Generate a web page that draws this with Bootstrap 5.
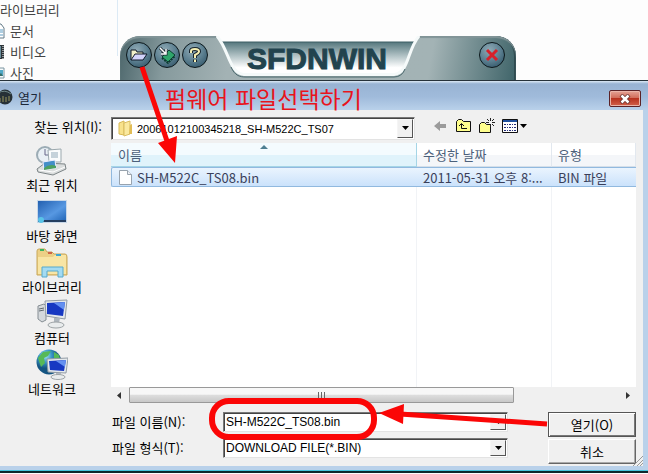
<!DOCTYPE html>
<html lang="ko">
<head>
<meta charset="utf-8">
<meta name="viewport" content="width=device-width, initial-scale=1">
<title>SFDNWIN - 열기</title>
<link href="https://cdn.jsdelivr.net/npm/bootstrap@5.3.0/dist/css/bootstrap.min.css" rel="stylesheet">
<style>
body{font:13px/20px "Liberation Sans","Noto Sans CJK KR",sans-serif;color:#000;background:#fdfdfd;min-width:648px;overflow-x:hidden}
svg{display:block;flex:none}
.ko{font-family:"Noto Sans CJK KR",sans-serif;font-weight:400}
.desk{height:80px}
.tree{width:118px;height:56px;padding-top:4px;border-right:1px solid #dceaf5;color:#444;line-height:12px}
.tree li{height:12px;margin-bottom:9px}
.skin{width:396px;height:44px;margin:36px 0 0 2px;border-radius:20px 20px 0 0;background:linear-gradient(100deg,#4c666b 0,#869a9d 12%,#a3b2b4 28%,#a3b3b5 78%,#3f6469 100%);box-shadow:inset 0 2px 1px #819497,inset -2px 0 0 #2f4b50;padding:0 11px 0 6px}
.plate{left:96px;top:0}
.brand{font:bold 30px/32px "Liberation Sans",sans-serif;color:#22434e;-webkit-text-stroke:1px #22434e;margin:7px 0 0 39px}
.orb{width:26px;height:26px;border:1px solid #0b171b;border-radius:50%;background:radial-gradient(circle at 40% 30%,#90aab5,#5b7f90 50%,#24475a);padding:0;display:grid;place-items:center}
.orbs{gap:2px;padding-top:6px}
.dialog{border-top:1px solid #26323a;background:#b9d1ea;padding:0 5px 5px 0;border-bottom:2px solid #10272c;box-shadow:inset 0 -1px #46c4dc}
.caption-bar{height:29px;background:linear-gradient(#dce9f5 0,#98b3d3 10%,#a0bbdb 55%,#b9d1ea);margin-right:-5px;padding-right:7px}
.caption-bar h1{font-size:13px;line-height:20px;margin:7px 0 0 4px;color:#1c2838}
.shut{width:32px;height:17px;margin-top:9px;padding:0;border:1px solid #5b2226;border-radius:2px;background:linear-gradient(#e5a496,#d16b58 48%,#b8331f 50%,#d2614a);box-shadow:inset 0 0 0 1px #eab5a9;display:grid;place-items:center}
.pane{background:#f0f0f0;padding:7px 7px 2px 0}
.lookrow{height:26px}
.side{width:111px}
.places{padding-bottom:5px}
.look-label{width:102px;margin-right:9px;text-align:right}
.combo{height:20px;background:#fff;border:1px solid;border-color:#777 #e3e3e3 #e3e3e3 #777;box-shadow:inset 1px 1px #444}
.combo select,.combo input{appearance:none;border:0;background:transparent;color:#000;min-width:0;flex:1;padding:0 2px;height:18px;font:12px/18px "Liberation Sans",sans-serif;outline:0}
.combo.tall{width:304px;height:23px}
.combo.tall select{height:21px;font-size:11px}
.drop{width:16px;border:1px solid;border-color:#f5f5f5 #555 #555 #f5f5f5;background:#f0f0f0;margin:1px;padding:0;display:grid;place-items:center}
.tool{border:0;background:none;padding:0}
.tools{gap:6px;margin-left:18px}
.place{height:51px;border:0;background:none;padding:2px 0 0;width:104px;color:#000;display:flex;flex-direction:column;align-items:center}
.place span{font-size:13px;line-height:18px}
.listing{background:#fff;min-width:0}
.files{table-layout:fixed;width:100%;border-collapse:separate;border-spacing:0}
.files th{height:24px;font-weight:400;padding:0 6px;border-right:1px solid #e2e8ef;border-bottom:1px solid #d5dfe9;background:linear-gradient(#fff 50%,#f4f6f9 50%);color:#4c607a;line-height:20px;position:relative}
.files th:first-child{width:306px;background:linear-gradient(#f4fbfe 50%,#e0f3fb 50%);border-color:#a5d5e6;padding-left:7px}
.files th:nth-child(2){width:135px}
.files td{height:20px;padding:0 6px;line-height:17px;background:linear-gradient(#eaf4fe,#cbe2fb);border:solid #91b9df;border-width:1px 0;white-space:nowrap;overflow:hidden;color:#3a3f5a}
.files td:first-child{border-left-width:1px;border-radius:2px 0 0 2px}
.files a{color:#3a3f5a;text-decoration:none}
.sorter{position:absolute;left:149px;top:1px}
.room{background:linear-gradient(90deg,transparent 305px,#f1f3f6 305px 306px,transparent 306px 440px,#f1f3f6 440px 441px,transparent 441px)}
.hbar{height:16px;background:#f0f0f0;padding:0 4px}
.thumb{flex:0 1 385px;margin-left:8px;border:1px solid #999;border-radius:1px;background:linear-gradient(#f7f7f7 45%,#dedede 50%,#c8c8c8);display:grid;place-items:center}
.fields{padding-top:9px;gap:0 40px}
.frow{height:26px}
.frow label{width:112px;flex:none;padding-left:1px}
.fbtns{gap:2px}
.fbtn{width:88px;height:25px;border:1px solid;border-color:#fff #666 #666 #fff;box-shadow:inset -1px -1px #aaa;background:#f0f0f0;padding:0;font-size:13px;line-height:20px;color:#000}
.fbtn.main{border-color:#555;box-shadow:inset 1px 1px #fff,inset -1px -1px #777}
.callout{position:absolute;left:0;top:0;pointer-events:none}
.tip{position:absolute;left:165px;top:82px;font-size:23px;line-height:32px;color:#e8141c;margin:0}
.grip{position:absolute;right:0;bottom:0}
</style>
<script src="https://cdn.jsdelivr.net/npm/bootstrap@5.3.0/dist/js/bootstrap.bundle.min.js"></script>
</head>
<body class="position-relative ko">
<section class="desk d-flex">
  <ul class="tree list-unstyled m-0 flex-shrink-0">
    <li>라이브러리</li>
    <li class="d-flex align-items-center"><svg width="10" height="16" viewBox="0 0 10 16"><path d="M-6 1H1L4 5V15H-6" fill="#fff" stroke="#627986"/><path d="M-1 7H3M-1 9H3M-1 12H3" stroke="#5d9bc2"/></svg>문서</li>
    <li class="d-flex align-items-center"><svg width="10" height="16" viewBox="0 0 10 16"><path d="M-2 1H4V15H-2Z" fill="#2d3439"/><path d="M-1 2H1V14H-1Z" fill="#6a8e9d"/><path d="M3 2V15" stroke="#fff" stroke-dasharray="1 1"/></svg>비디오</li>
    <li class="d-flex align-items-center"><svg width="10" height="12" viewBox="0 2 10 12"><path d="M-3 3H4V13H-3Z" fill="#f7fbfc" stroke="#7b94a0"/><path d="M-2 5H3V11H-2Z" fill="#50a9c7"/><path d="M-2 11L1 8L3 11Z" fill="#376d69"/></svg>사진</li>
  </ul>
  <div class="skin position-relative d-flex flex-shrink-0">
    <svg class="plate position-absolute" width="206" height="44" viewBox="0 0 206 44"><defs><linearGradient id="pl" x2="0" y2="1"><stop stop-color="#55777d"/><stop offset=".45" stop-color="#b5c5c8"/><stop offset=".8" stop-color="#fff"/></linearGradient></defs><path d="M0 0H204L199 7H5Z" fill="#fdfdfd"/><path d="M5 6H199C191 17 191 34 180 38H28C16 37 14 19 5 6Z" fill="url(#pl)"/><path d="M5 6H199" stroke="#3c5e65"/><path d="M1 0C13 14 13 37 28 38.500H178C193 37 191 14 203 0" fill="none" stroke="#f5fafa" stroke-width="3"/><path d="M15 31C19 40 24 41 30 41H178Q186 41 189 33" fill="none" stroke="#4a686d"/></svg>
    <div class="orbs d-flex position-relative align-items-start">
      <button class="orb" aria-label="열기"><svg width="18" height="14" viewBox="0 0 18 14"><path d="M1 12V2H6L7 4H13V6" fill="#f1efc9" stroke="#101929"/><path d="M1 12L5 6H17L13 12Z" fill="#d3d3fb" stroke="#101929"/></svg></button>
      <button class="orb" aria-label="다운로드"><svg width="20" height="20" viewBox="0 0 20 20"><path d="M5 12L12 5L18 10L11 17Z" fill="#2fa56b" stroke="#0c3e32"/><path d="M5 13L11 18L18 11" fill="none" stroke="#0b3e30" stroke-width="2" stroke-dasharray="2 1"/><path d="M3 3L8 8M9 4V9H4" fill="none" stroke="#17242c" stroke-width="3"/><path d="M3 3L8 8M9 4V9H4" fill="none" stroke="#fff" stroke-width="1.500"/></svg></button>
      <button class="orb" aria-label="도움말"><svg width="14" height="18" viewBox="0 0 14 18"><path d="M3 7V5Q3 3 7 3Q11 3 11 5.500Q11 7 7 9V12M7 13.500V16" fill="none" stroke="#17242c" stroke-width="4"/><path d="M3 7V5Q3 3 7 3Q11 3 11 5.500Q11 7 7 9V12M7 13.500V16" fill="none" stroke="#f5efb3" stroke-width="2"/></svg></button>
    </div>
    <div class="brand position-relative">SFDNWIN</div>
    <div class="orbs d-flex position-relative align-items-start ms-auto"><button class="orb" aria-label="종료"><svg width="14" height="14" viewBox="0 0 14 14"><path d="M2 2L12 12M12 2L2 12" stroke="#d8202a" stroke-width="3"/></svg></button></div>
  </div>
</section>

<main class="dialog position-relative">
  <header class="caption-bar d-flex align-items-start">
    <svg class="mt-2" width="14" height="17" viewBox="0 0 14 17"><circle cx="5" cy="8" r="7.500" fill="#263036"/><path d="M-2 4Q5 0 11 5" fill="none" stroke="#6f8788"/><path d="M0 13V9M3 13V7M6 13V8M9 12V7" stroke="#97945c"/></svg>
    <h1 class="ko">열기</h1>
    <button class="shut ms-auto" aria-label="닫기"><svg width="12" height="10" viewBox="0 0 12 10"><path d="M2 1L10 9M10 1L2 9" stroke="#63302d" stroke-width="4"/><path d="M2.500 1.500L9.500 8.500M9.500 1.500L2.500 8.500" stroke="#fff" stroke-width="2.500"/></svg></button>
  </header>
  <div class="pane position-relative">
    <div class="lookrow d-flex align-items-start">
      <label class="look-label" for="look">찾는 위치(I):</label>
      <div class="combo tall d-flex">
        <svg class="ms-1 align-self-center" width="19" height="17" viewBox="0 0 19 17"><path d="M3 3L8 1V15L3 14Z" fill="#f8e28c" stroke="#d7b957"/><path d="M8 3L14 1V14L8 16Z" fill="#fae99f" stroke="#d9bd62"/><path d="M14 5L16 4V14H13Z" fill="#e2bd56"/></svg>
        <select id="look"><option>20061012100345218_SH-M522C_TS07</option></select>
        <span class="drop"><svg width="9" height="5"><path d="M1 0H8L4.500 4Z"/></svg></span>
      </div>
      <div class="tools d-flex align-items-center">
        <button class="tool" aria-label="뒤로"><svg width="16" height="18" viewBox="0 0 16 18"><path d="M1 9L7 4V7H13V11H7V14Z" fill="#9b9b9b"/></svg></button>
        <button class="tool" aria-label="한 단계 위로"><svg width="17" height="18" viewBox="0 0 17 18"><path d="M1.500 14.500V4.500L3.500 2.500H6.500L8.500 4.500H15.500V14.500Z" fill="#ffff8e" stroke="#111"/><path d="M6.500 7V11.500H12M4 9L6.500 6.500L9 9" fill="none" stroke="#111"/></svg></button>
        <button class="tool" aria-label="새 폴더"><svg width="18" height="18" viewBox="0 0 18 18"><path d="M1.500 15.500V7.500L3.500 5.500H6.500L8.500 7.500H12.500V15.500Z" fill="#ffff8e" stroke="#111"/><path d="M12.500 1V4M12.500 7V10M8 5.500H11M14 5.500H17M9 2L11 4M16 2L14 4M16 9L14 7" stroke="#222"/></svg></button>
        <button class="tool" aria-label="보기 메뉴"><svg width="26" height="18" viewBox="0 0 26 18"><path d="M.5 2.500H15.500V15.500H.5Z" fill="#fff" stroke="#111"/><path d="M1 4H15" stroke="#1e4f9d" stroke-width="2"/><path d="M2 7.500H14M2 10.500H14M2 13.500H14" stroke="#242e78" stroke-dasharray="2 1 1 1"/><path d="M18 7H25L21.500 11Z"/></svg></button>
      </div>
    </div>
    <div class="d-flex">
      <nav class="side places flex-shrink-0">
        <button class="place"><svg width="32" height="31" viewBox="0 0 32 31"><circle cx="9" cy="10" r="8" fill="#e9f0f5" stroke="#9cacb5" stroke-width="2"/><path d="M9 4V10H13" fill="none" stroke="#668"/><path d="M12 5L25 4V17H13Z" fill="#fafcfd" stroke="#9ba8ad"/><path d="M15 8H22M15 10H22M15 12H22" stroke="#91a9b9"/><path d="M1 24L9 18L29 19L30 24L17 30L2 27Z" fill="#dadddd" stroke="#7d8587"/><path d="M7 17L19 15L20 23L8 25Z" fill="#428ec8" stroke="#eef"/><path d="M8 23Q14 18 20 21V23L8 25Z" fill="#4da060"/><path d="M3 25L17 27L29 22" fill="none" stroke="#fff"/></svg><span>최근 위치</span></button>
        <button class="place"><svg width="32" height="31" viewBox="0 0 32 31"><defs><linearGradient id="dk" x2="1" y2="1"><stop stop-color="#2360b0"/><stop offset=".6" stop-color="#5798e2"/><stop offset="1" stop-color="#2468b9"/></linearGradient></defs><path d="M1 4H31V27H1Z" fill="#c7d7e8"/><path d="M2 5H30V24H2Z" fill="url(#dk)"/><path d="M2 24H30V26H2Z" fill="#243e60"/><circle cx="5" cy="24" r="3" fill="#59c4e8"/></svg><span>바탕 화면</span></button>
        <button class="place"><svg width="32" height="31" viewBox="0 0 32 31"><path d="M1 4Q1 2 3 2H9L11 5H16L18 7H29Q31 7 31 10V28H1Z" fill="#ecd086" stroke="#c8a758"/><path d="M2 10H17L19 8H30V27H2Z" fill="#f8e5a5"/><path d="M4 3H8" stroke="#3bb55c" stroke-width="2"/><path d="M12 6H16" stroke="#cf6446" stroke-width="2"/><path d="M20 8H25" stroke="#3ea7d3" stroke-width="2"/><path d="M6 30V20H27V30H22V24H11V30Z" fill="#a4dbf2" stroke="#57a9cc"/></svg><span>라이브러리</span></button>
        <button class="place"><svg width="32" height="31" viewBox="0 0 32 31"><path d="M2 8L8 6L10 8V22L6 24L2 21Z" fill="#d5d9dc" stroke="#858d93"/><path d="M3 11L8 10M3 13L8 12" stroke="#60686d"/><path d="M9 3L31 2L29 21L10 18Z" fill="#e5e9ec" stroke="#929ba4"/><path d="M11 5L29 4L27 18L11 16Z" fill="#1738c2"/><path d="M18 5L29 4L28 12Z" fill="#6490f0"/><path d="M18 20H24L23 25H18Z" fill="#aeb6bd"/><ellipse cx="20" cy="27" rx="8" ry="3" fill="#e9eced" stroke="#9da3a6"/></svg><span>컴퓨터</span></button>
        <button class="place"><svg width="32" height="31" viewBox="0 0 32 31"><defs><radialGradient id="gl" cx=".35" cy=".25"><stop stop-color="#b0eaf8"/><stop offset=".5" stop-color="#3b99c8"/><stop offset="1" stop-color="#155582"/></radialGradient></defs><circle cx="13" cy="13" r="12.500" fill="url(#gl)"/><path d="M2 9L7 3L15 2L12 7L8 9L9 14L5 18ZM18 3L23 6L24 10H18Z" fill="#56b957"/><path d="M11 10L32 9L30 24L12 23Z" fill="#e4e9ec" stroke="#929ba4"/><path d="M13 12L30 11L28 22L14 21Z" fill="#1738c2"/><path d="M20 12L30 11L29 18Z" fill="#6490f0"/><path d="M20 24H25V27H20Z" fill="#aeb6bd"/><ellipse cx="22" cy="28" rx="7" ry="2.500" fill="#e9eced" stroke="#9da3a6"/></svg><span>네트워크</span></button>
      </nav>
      <section class="listing flex-fill d-flex flex-column">
        <table class="files">
          <thead><tr><th scope="col">이름<svg class="sorter" width="8" height="6"><path d="M0 5L4 1L8 5Z" fill="#4f7f91"/></svg></th><th scope="col">수정한 날짜</th><th scope="col">유형</th></tr></thead>
          <tbody><tr><td><a href="#" class="d-flex align-items-center gap-1"><svg width="15" height="17" viewBox="0 0 15 17"><path d="M1.500 1.500H9.500L13.500 5.500V15.500H1.500Z" fill="#fff" stroke="#98a3ae"/><path d="M9.500 1.500V5.500H13.500" fill="#edf0f4" stroke="#98a3ae"/></svg>SH-M522C_TS08.bin</a></td><td>2011-05-31 오후 8:...</td><td>BIN 파일</td></tr></tbody>
        </table>
        <div class="room flex-fill"></div>
        <div class="hbar d-flex">
          <svg class="align-self-center" width="6" height="7"><path d="M6 0V7L2 3.500Z" fill="#333"/></svg>
          <div class="thumb"><svg width="9" height="6"><path d="M1.500 0V6M4.500 0V6M7.500 0V6" stroke="#666"/></svg></div>
          <svg class="align-self-center ms-auto" width="6" height="7"><path d="M0 0V7L4 3.500Z" fill="#333"/></svg>
        </div>
      </section>
    </div>
    <form class="fields d-flex">
      <div class="flex-fill">
        <div class="frow d-flex"><span class="side flex-shrink-0"></span><label for="fname">파일 이름(N):</label><div class="combo d-flex flex-fill"><input id="fname" value="SH-M522C_TS08.bin"><button type="button" class="drop" aria-label="목록"><svg width="9" height="5"><path d="M1 0H8L4.500 4Z"/></svg></button></div></div>
        <div class="frow d-flex"><span class="side flex-shrink-0"></span><label for="ftype">파일 형식(T):</label><div class="combo d-flex flex-fill"><select id="ftype"><option>DOWNLOAD FILE(*.BIN)</option></select><span class="drop"><svg width="9" height="5"><path d="M1 0H8L4.500 4Z"/></svg></span></div></div>
      </div>
      <div class="fbtns d-flex flex-column">
        <button type="button" class="fbtn main">열기(O)</button>
        <button type="button" class="fbtn">취소</button>
      </div>
    </form>
    <svg class="grip" width="11" height="11"><path d="M1 11L11 1M5 11L11 5M8 11L11 8" stroke="#999"/></svg>
  </div>
</main>

<p class="tip">펌웨어 파일선택하기</p>
<svg class="callout" width="648" height="474" viewBox="0 0 648 474" aria-hidden="true"><g fill="none" stroke="#fb0606"><path d="M142 67L167 141" stroke-width="5"/><rect x="212" y="401" width="162" height="36" rx="17" stroke-width="6"/><path d="M547 424L400 414" stroke-width="5"/></g><path d="M158 143L177 136L175 163ZM379 413L404 404L403 424Z" fill="#fb0606"/></svg>
</body>
</html>
